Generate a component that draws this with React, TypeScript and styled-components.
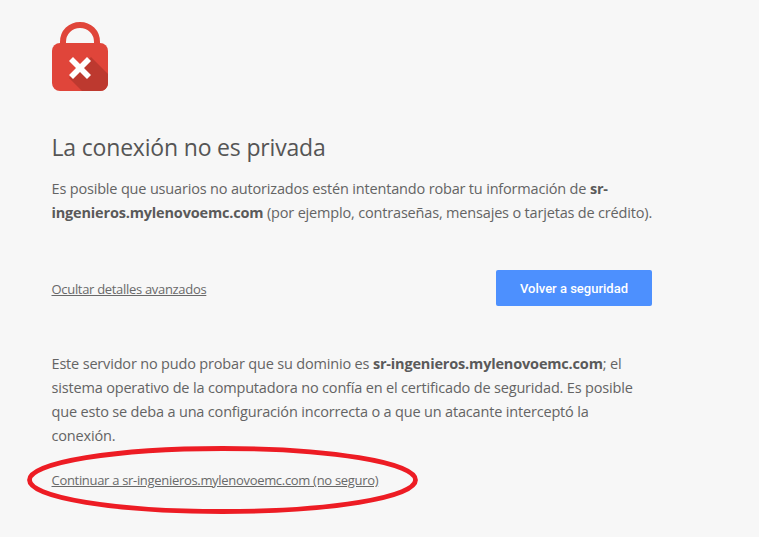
import React from "react";
import styled, { createGlobalStyle } from "styled-components";

const Global = createGlobalStyle`
  html, body { margin: 0; padding: 0; background: #f7f7f7; overflow: hidden; }
  #root { height: 537px; }
`;

const Page = styled.main`
  position: relative;
  box-sizing: border-box;
  width: 759px;
  height: 537px;
  padding: 22px 0 0 52px;
  font-family: "Open Sans", "Noto Sans", sans-serif;
  color: #646464;
`;

const Content = styled.div`
  width: 600px;
  display: flex;
  flex-direction: column;
`;

const LockIcon = styled.svg`
  display: block;
  width: 56px;
  height: 69px;
`;

const Heading = styled.h1`
  margin: 38px 0 0;
  font-size: 23px;
  line-height: 36px;
  font-weight: 400;
  color: #555;
  letter-spacing: -0.18px;
  margin-left: -0.5px;
`;

const Paragraph = styled.p`
  margin: 12px -1.5px 0 -0.5px;
  font-size: 14.5px;
  line-height: 24px;
  letter-spacing: -0.175px;
  & > strong { font-weight: 700; color: #5a5a5a; }
`;

const ActionRow = styled.div`
  display: flex;
  align-items: center;
  justify-content: space-between;
  margin-top: 45px;
  height: 36px;
  & > a { margin: 2px 0 0 -0.5px; }
`;

const TextLink = styled.a`
  font-size: 13px;
  line-height: 20px;
  color: #696969;
  letter-spacing: -0.31px;
  text-decoration: underline;
`;

const PrimaryButton = styled.button`
  width: 156px;
  height: 36px;
  border: none;
  border-radius: 2px;
  background: #4d90fe;
  color: #fff;
  font-family: Roboto, "Liberation Sans", sans-serif;
  font-size: 13px;
  font-weight: 500;
  padding: 0;
`;

const Details = styled.div`
  margin-top: 46px;
  display: flex;
  flex-direction: column;
  & > p { margin-top: 0; margin-bottom: 0; }
`;

const ProceedRow = styled.div`
  margin: 19px 0 0 -0.5px;
  line-height: 24px;
`;

const Annotation = styled.svg`
  position: absolute;
  left: 20px;
  top: 440px;
  width: 410px;
  height: 80px;
  pointer-events: none;
`;

export default function App() {
  return (
    <Page>
      <Global />
      <Content>
        <LockIcon viewBox="0 0 56 69" aria-hidden="true">
          <path d="M11 27V20C11 10 18.500 3 28 3S45 10 45 20V27" fill="none" stroke="#e0453a" strokeWidth="6" />
          <rect x="0" y="21" width="56" height="48" rx="8" fill="#e0453a" />
          <path d="M17 56L39 35L56 52V61C56 65.500 52.500 69 48 69H30Z" fill="#bd392f" />
          <path d="M21 35L28 42L35 35L39 39L32 46L39 53L35 57L28 50L21 57L17 53L24 46L17 39Z" fill="#fff" />
        </LockIcon>
        <Heading>La conexión no es privada</Heading>
        <Paragraph>
          Es posible que usuarios no autorizados estén intentando robar tu información de <strong>sr-ingenieros.mylenovoemc.com</strong> (por ejemplo, contraseñas, mensajes o tarjetas de crédito).
        </Paragraph>
        <ActionRow>
          <TextLink>Ocultar detalles avanzados</TextLink>
          <PrimaryButton>Volver a seguridad</PrimaryButton>
        </ActionRow>
        <Details>
          <Paragraph>
            Este servidor no pudo probar que su dominio es <strong>sr-ingenieros.mylenovoemc.com</strong>; el sistema operativo de la computadora no confía en el certificado de seguridad. Es posible que esto se deba a una configuración incorrecta o a que un atacante interceptó la conexión.
          </Paragraph>
          <ProceedRow>
            <TextLink>Continuar a sr-ingenieros.mylenovoemc.com (no seguro)</TextLink>
          </ProceedRow>
        </Details>
      </Content>
      <Annotation viewBox="0 0 410 80" aria-hidden="true">
        <ellipse cx="202.500" cy="40" rx="193" ry="31.500" fill="none" stroke="#ed1c24" strokeWidth="4.800" />
      </Annotation>
    </Page>
  );
}
